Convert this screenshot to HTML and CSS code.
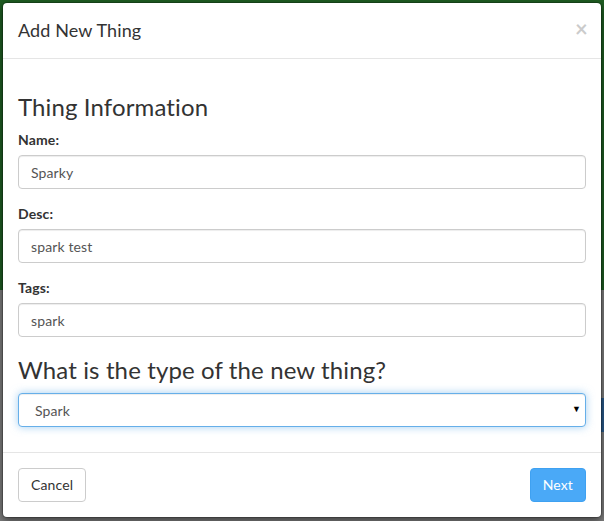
FILE: index.html
```html
<!DOCTYPE html>
<html>
<head>
<meta charset="utf-8">
<link rel="stylesheet" href="styles.css">
</head>
<body>
<div class="page">
  <div class="page-top"></div>
  <div class="page-bottom">
    <div class="blue-bar"></div>
  </div>
</div>
<div class="modal">
  <div class="modal-header">
    <h4 class="modal-title">Add New Thing</h4>
    <span class="close">&times;</span>
  </div>
  <div class="modal-body">
    <h3 class="section-title">Thing Information</h3>
    <div class="form-group">
      <label class="label">Name:</label>
      <input class="form-control" type="text" value="Sparky">
    </div>
    <div class="form-group">
      <label class="label">Desc:</label>
      <input class="form-control" type="text" value="spark test">
    </div>
    <div class="form-group">
      <label class="label">Tags:</label>
      <input class="form-control" type="text" value="spark">
    </div>
    <h3 class="section-title">What is the type of the new thing?</h3>
    <div class="select-wrap">
      <select class="form-select"><option>Spark</option></select>
      <span class="caret">&#9660;</span>
    </div>
  </div>
  <div class="modal-footer">
    <button class="btn btn-default">Cancel</button>
    <button class="btn btn-primary">Next</button>
  </div>
</div>
</body>
</html>
```
FILE: styles.css
```css
* { box-sizing: border-box; }
html, body { margin: 0; padding: 0; }
body {
  width: 604px;
  height: 521px;
  overflow: hidden;
  position: relative;
  font-family: "Lato", "Open Sans", sans-serif;
  font-size: 14px;
  letter-spacing: 0.12px;
  color: #333;
  background: #808080;
}
.page { display: flex; flex-direction: column; height: 521px; }
.page-top { height: 290px; background: #1f5e22; }
.page-bottom { flex: 1; background: #7f7f7f; padding-top: 108px; display: flex; justify-content: flex-end; }
.blue-bar { width: 6px; height: 34px; background: #2a5b8c; }

.modal {
  position: absolute;
  top: 2px;
  left: 2px;
  width: 600px;
  background: #fff;
  border: 1px solid rgba(0,0,0,0.2);
  border-radius: 5px;
  box-shadow: 0 3px 9px rgba(0,0,0,0.5);
  background-clip: padding-box;
}
.modal-header {
  display: flex;
  align-items: center;
  justify-content: space-between;
  padding: 15px;
  border-bottom: 1px solid #e5e5e5;
}
.modal-title {
  margin: 0;
  font-size: 18px;
  font-weight: 400;
  line-height: 25px;
  color: #333;
}
.close {
  font-size: 22px;
  font-weight: 700;
  line-height: 1;
  color: #000;
  opacity: 0.2;
  margin-right: -2px;
  margin-top: -3px;
}
.modal-body { padding: 15px 15px 15px; }
.section-title {
  margin: 20px 0 10px;
  font-size: 24px;
  font-weight: 400;
  line-height: 26px;
  color: #333;
}
.form-group { margin-bottom: 15px; display: flex; flex-direction: column; }
.label {
  font-weight: 700;
  line-height: 20px;
  margin-bottom: 5px;
  color: #333;
}
.form-control {
  height: 34px;
  width: 100%;
  padding: 6px 12px;
  font-family: inherit;
  font-size: 14px;
  letter-spacing: 0.12px;
  color: #555;
  background: #fff;
  border: 1px solid #ccc;
  border-radius: 4px;
  box-shadow: inset 0 1px 1px rgba(0,0,0,0.075);
  outline: none;
}
.select-wrap { position: relative; margin-bottom: 10px; }
.form-select {
  -webkit-appearance: none;
  appearance: none;
  display: block;
  width: 100%;
  height: 34px;
  padding: 6px 16px;
  font-family: inherit;
  font-size: 14px;
  letter-spacing: 0.12px;
  color: #555;
  background: #fff;
  border: 1px solid #66afe9;
  border-radius: 4px;
  box-shadow: inset 0 1px 1px rgba(0,0,0,0.075), 0 0 8px rgba(102,175,233,0.6);
  outline: none;
}
.caret {
  position: absolute;
  right: 5px;
  top: 11px;
  font-size: 9px;
  color: #000;
  line-height: 10px;
  pointer-events: none;
}
.modal-footer {
  display: flex;
  justify-content: space-between;
  padding: 15px;
  border-top: 1px solid #e5e5e5;
}
.btn {
  height: 34px;
  padding: 6px 12px;
  font-family: inherit;
  font-size: 14px;
  letter-spacing: 0.12px;
  line-height: 20px;
  border-radius: 4px;
  border: 1px solid transparent;
}
.btn-default { background: #fff; border-color: #ccc; color: #333; }
.btn-primary { background: #4aa9f7; border-color: #3fa1f1; color: #fff; }
```
